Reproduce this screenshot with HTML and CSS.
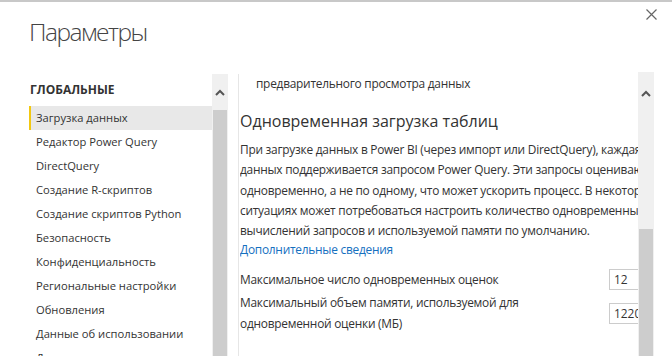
FILE: index.html
```html
<!DOCTYPE html>
<html lang="ru">
<head>
    <meta charset="UTF-8">
    <meta name="viewport" content="width=device-width, initial-scale=1.0">
    <title>Параметры</title>
    <link rel="stylesheet" href="styles.css">
</head>
<body>
    <div class="dialog">
        <header class="dialog-head">
            <h1>Параметры</h1>
            <button class="close" aria-label="Закрыть">
                <svg width="11" height="11" viewBox="0 0 11 11"><path d="M0.5 0.5L10.5 10.5M10.5 0.5L0.5 10.5" stroke="#666" stroke-width="1.2" fill="none"/></svg>
            </button>
        </header>
        <div class="dialog-body">
            <nav class="side">
                <div class="side-list">
                    <h2>ГЛОБАЛЬНЫЕ</h2>
                    <div class="item active">Загрузка данных</div>
                    <div class="item">Редактор Power Query</div>
                    <div class="item">DirectQuery</div>
                    <div class="item">Создание R-скриптов</div>
                    <div class="item">Создание скриптов Python</div>
                    <div class="item">Безопасность</div>
                    <div class="item">Конфиденциальность</div>
                    <div class="item">Региональные настройки</div>
                    <div class="item">Обновления</div>
                    <div class="item">Данные об использовании</div>
                    <div class="item">Диагностика</div>
                </div>
                <div class="scrollbar side-scroll">
                    <div class="arrow"><svg width="10" height="7" viewBox="0 0 10 7"><path d="M1 6L5 2L9 6" stroke="#555" stroke-width="2" fill="none"/></svg></div>
                    <div class="thumb"></div>
                </div>
            </nav>
            <main class="content">
                <div class="content-inner">
                    <p class="tail">предварительного просмотра данных</p>
                    <h3>Одновременная загрузка таблиц</h3>
                    <p class="desc">При загрузке данных в Power BI (через импорт или DirectQuery), каждая таблица<br>
                        данных поддерживается запросом Power Query. Эти запросы оцениваются<br>
                        одновременно, а не по одному, что может ускорить процесс. В некоторых<br>
                        ситуациях может потребоваться настроить количество одновременных<br>
                        вычислений запросов и используемой памяти по умолчанию.</p>
                    <a class="more" href="#">Дополнительные сведения</a>
                    <div class="field">
                        <label>Максимальное число одновременных оценок</label>
                        <input type="text" value="12">
                    </div>
                    <div class="field">
                        <label>Максимальный объем памяти, используемой для<br>одновременной оценки (МБ)</label>
                        <input type="text" value="1220">
                    </div>
                </div>
                <div class="scrollbar content-scroll">
                    <div class="arrow"><svg width="10" height="7" viewBox="0 0 10 7"><path d="M1 6L5 2L9 6" stroke="#555" stroke-width="2" fill="none"/></svg></div>
                    <div class="thumb"></div>
                </div>
            </main>
        </div>
    </div>
</body>
</html>
```

FILE: styles.css
```css
body {
    margin: 0;
    font-family: "Open Sans", "Noto Sans", sans-serif;
    color: #333;
    background: #fff;
    overflow: hidden;
}
.dialog {
    height: 356px;
    border-top: 2px solid #c8c8c8;
    box-sizing: border-box;
    display: flex;
    flex-direction: column;
}
.dialog-head {
    display: flex;
    justify-content: space-between;
    align-items: flex-start;
    padding-left: 29px;
    height: 70px;
    flex-shrink: 0;
}
.dialog-head h1 {
    margin: 13px 0 0;
    font-size: 24.5px;
    font-weight: 300;
    letter-spacing: -1.5px;
    color: #444;
}
.close {
    border: none;
    background: none;
    padding: 0;
    margin: 7px 15px 0 0;
    width: 11px;
    height: 11px;
    line-height: 0;
}
.dialog-body {
    flex: 1;
    display: flex;
    min-height: 0;
}
.side {
    flex: 0 0 199px;
    padding-left: 29px;
    padding-right: 10px;
    display: flex;
    border-right: 1px solid #e6e6e6;
    margin-top: 2px;
}
.side-list {
    flex: 1;
    min-width: 0;
    overflow: hidden;
}
.side h2 {
    margin: 0 0 0 1px;
    padding-top: 7px;
    font-size: 12px;
    font-weight: 700;
    color: #333;
    height: 25px;
}
.item {
    height: 24px;
    line-height: 24px;
    font-size: 11.2px;
    padding-left: 5px;
    white-space: nowrap;
    border-left: 2px solid transparent;
}
.item.active {
    background: #e8e8e8;
    border-left-color: #f2c811;
}
.scrollbar {
    width: 16px;
    flex-shrink: 0;
    background: #f0f0f0;
    display: flex;
    flex-direction: column;
}
.arrow {
    height: 36px;
    display: flex;
    justify-content: center;
    align-items: center;
}
.thumb {
    flex: 1;
    background: #cdcdcd;
    margin: 0 1px;
}
.content-scroll .arrow {
    height: 42px;
}
.content-scroll .thumb {
    margin-top: 115px;
}
.content {
    flex: 1;
    min-width: 0;
    display: flex;
    padding-left: 1px;
    padding-right: 18px;
}
.content-inner {
    flex: 1;
    min-width: 0;
    overflow: hidden;
    font-size: 11.9px;
    letter-spacing: -0.25px;
}
.tail {
    margin: 3px 0 0 16px;
    white-space: nowrap;
}
.content h3 {
    margin: 19px 0 0;
    font-size: 16px;
    font-weight: 400;
    letter-spacing: 0;
    white-space: nowrap;
}
.desc {
    margin: 7px 0 0;
    line-height: 20.25px;
    white-space: nowrap;
}
.more {
    color: #1570bf;
    text-decoration: none;
    display: block;
    line-height: 18px;
}
.field {
    display: flex;
    justify-content: space-between;
    align-items: center;
    margin-top: 11px;
    line-height: 21px;
}
.field + .field {
    margin-top: 2px;
}
.field input {
    width: 40px;
    height: 21px;
    box-sizing: border-box;
    border: 1px solid #ccc;
    font: inherit;
    letter-spacing: 0;
    color: #333;
    padding: 0 4px;
    margin-right: -11px;
}
```
